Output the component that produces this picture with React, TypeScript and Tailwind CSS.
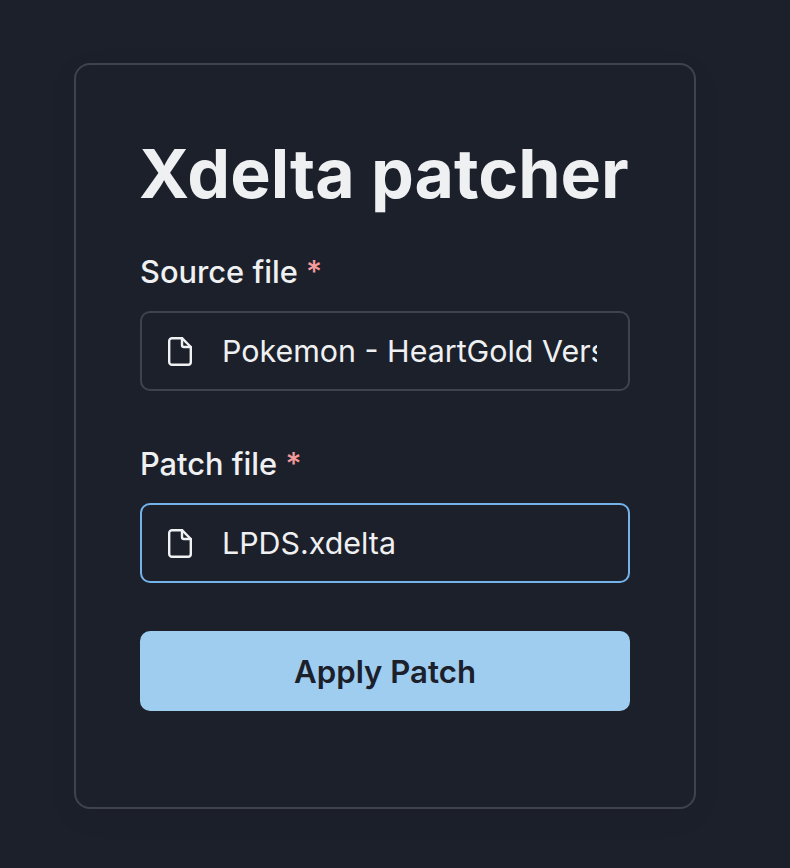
function FileIcon() {
  return (
    <svg className="w-[24px] h-[29px] shrink-0" viewBox="0 0 24 29" fill="none" stroke="#f0f1f3" strokeWidth="2.4" strokeLinejoin="round" strokeLinecap="round">
      <path d="M4 1.2h10L22.8 10v15a2.8 2.8 0 0 1-2.8 2.8H4A2.8 2.8 0 0 1 1.2 25V4A2.8 2.8 0 0 1 4 1.2z" />
      <path d="M14 1.2V8a2 2 0 0 0 2 2h6.8" />
    </svg>
  );
}

function FileField({ label, value, focused }: { label: string; value: string; focused?: boolean }) {
  return (
    <div>
      <div className="text-[30.8px] leading-[40px] font-medium text-[#eff0f2] mb-[19px]">
        {label} <span className="text-[#f49a9a]">*</span>
      </div>
      <div className={`h-[80px] rounded-[10px] border-2 flex items-center pl-[26px] pr-[31px] ${focused ? 'border-[#74b2ea]' : 'border-[#3f434e]'}`}>
        <FileIcon />
        <div className="ml-[30px] pt-[2px] text-[30.4px] text-[#eff0f2] whitespace-nowrap overflow-hidden">{value}</div>
      </div>
    </div>
  );
}

export default function App() {
  return (
    <div className="min-h-[868px] bg-[#1c202b] pt-[63px] pl-[74px]" style={{ fontFamily: 'Inter, sans-serif' }}>
      <div className="w-[622px] h-[746px] rounded-[16px] border-2 border-[#3f434e] shadow-[0_8px_30px_rgba(0,0,0,0.06)] pt-[72px] px-[64px]">
        <h1 className="text-[68px] leading-[72px] font-bold text-[#eff0f2] whitespace-nowrap -ml-px mb-[43px]">Xdelta patcher</h1>
        <div className="flex flex-col gap-[53px]">
          <FileField label="Source file" value="Pokemon - HeartGold Version (USA).nds" />
          <FileField label="Patch file" value="LPDS.xdelta" focused />
        </div>
        <button className="mt-[48px] w-full h-[80px] pt-[2px] rounded-[10px] bg-[#9fcdf0] text-[31.2px] font-semibold text-[#1c202b]">Apply Patch</button>
      </div>
    </div>
  );
}
